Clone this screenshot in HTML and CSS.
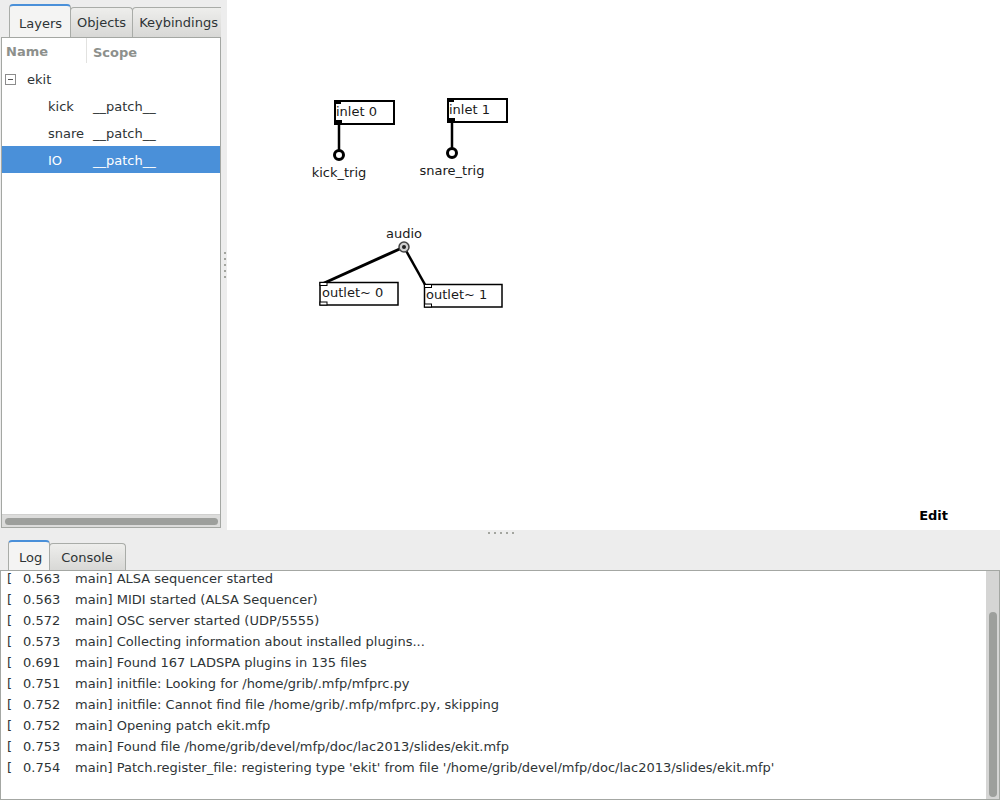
FILE: index.html
```html
<!DOCTYPE html>
<html>
<head>
<meta charset="utf-8">
<link rel="stylesheet" href="styles.css">
</head>
<body>
<div class="app">
  <div class="top">
    <div class="sidebar">
      <div class="tabs">
        <div class="tab active">Layers</div>
        <div class="tab">Objects</div>
        <div class="tab">Keybindings</div>
      </div>
      <div class="frame">
        <div class="tree">
          <div class="row header"><span class="c1">Name</span><span class="c2">Scope</span></div>
          <div class="row"><span class="c1 lvl0"><span class="exp"></span>ekit</span><span class="c2"></span></div>
          <div class="row"><span class="c1 lvl1">kick</span><span class="c2">__patch__</span></div>
          <div class="row"><span class="c1 lvl1">snare</span><span class="c2">__patch__</span></div>
          <div class="row selected"><span class="c1 lvl1">IO</span><span class="c2">__patch__</span></div>
        </div>
        <div class="hscroll"><div class="hthumb"></div></div>
      </div>
    </div>
    <div class="vhandle"><span class="dot"></span><span class="dot"></span><span class="dot"></span><span class="dot"></span><span class="dot"></span></div>
    <div class="canvas">
      <svg class="patch" width="773" height="530" viewBox="227 0 773 530" xmlns="http://www.w3.org/2000/svg">
        <g class="obj">
          <rect x="335" y="101" width="59" height="23" fill="#fff" stroke="#000" stroke-width="2"/>
          <rect x="334" y="100" width="7" height="4" fill="#000"/>
          <rect x="334" y="120" width="8" height="5" fill="#000"/>
          <text x="336" y="116">inlet 0</text>
          <line x1="339" y1="124" x2="339" y2="151" stroke="#000" stroke-width="2.5"/>
          <circle cx="339" cy="155" r="4.5" fill="#fff" stroke="#000" stroke-width="3"/>
          <text x="339" y="177" text-anchor="middle">kick_trig</text>
        </g>
        <g class="obj">
          <rect x="448" y="99" width="59" height="23" fill="#fff" stroke="#000" stroke-width="2"/>
          <rect x="447" y="98" width="7" height="4" fill="#000"/>
          <rect x="447" y="118" width="8" height="5" fill="#000"/>
          <text x="449" y="114">inlet 1</text>
          <line x1="452" y1="122" x2="452" y2="149" stroke="#000" stroke-width="2.5"/>
          <circle cx="452" cy="153" r="4.5" fill="#fff" stroke="#000" stroke-width="3"/>
          <text x="452" y="175" text-anchor="middle">snare_trig</text>
        </g>
        <g class="obj">
          <text x="404" y="238" text-anchor="middle">audio</text>
          <line x1="404" y1="247" x2="322" y2="284" stroke="#000" stroke-width="3"/>
          <line x1="404" y1="247" x2="428" y2="290" stroke="#000" stroke-width="2.5"/>
          <circle cx="404" cy="247" r="5" fill="#d0d0d0" stroke="#444" stroke-width="1.5"/>
          <circle cx="404" cy="247" r="2" fill="#222"/>
          <rect x="320" y="282.5" width="78" height="22.5" fill="#fff" stroke="#000" stroke-width="1.5"/>
          <rect x="320" y="282.5" width="7" height="3" fill="#fff" stroke="#000" stroke-width="1"/>
          <rect x="320" y="302" width="7" height="3" fill="#fff" stroke="#000" stroke-width="1"/>
          <text x="322" y="297">outlet~ 0</text>
          <rect x="424.5" y="284.5" width="77.5" height="22.5" fill="#fff" stroke="#000" stroke-width="1.5"/>
          <rect x="424.5" y="284.5" width="7" height="3" fill="#fff" stroke="#000" stroke-width="1"/>
          <rect x="424.5" y="304" width="7" height="3" fill="#fff" stroke="#000" stroke-width="1"/>
          <text x="426" y="299">outlet~ 1</text>
        </g>
      </svg>
      <div class="mode">Edit</div>
    </div>
  </div>
  <div class="bottom">
    <div class="hhandle"><span class="dot"></span><span class="dot"></span><span class="dot"></span><span class="dot"></span><span class="dot"></span></div>
    <div class="tabs btabs">
      <div class="tab active tab-log">Log</div>
      <div class="tab tab-console">Console</div>
    </div>
    <div class="logframe">
      <div class="log">
        <div class="line"><span class="br">[</span><span class="t">0.563</span><span class="m">main] ALSA sequencer started</span></div>
        <div class="line"><span class="br">[</span><span class="t">0.563</span><span class="m">main] MIDI started (ALSA Sequencer)</span></div>
        <div class="line"><span class="br">[</span><span class="t">0.572</span><span class="m">main] OSC server started (UDP/5555)</span></div>
        <div class="line"><span class="br">[</span><span class="t">0.573</span><span class="m">main] Collecting information about installed plugins...</span></div>
        <div class="line"><span class="br">[</span><span class="t">0.691</span><span class="m">main] Found 167 LADSPA plugins in 135 files</span></div>
        <div class="line"><span class="br">[</span><span class="t">0.751</span><span class="m">main] initfile: Looking for /home/grib/.mfp/mfprc.py</span></div>
        <div class="line"><span class="br">[</span><span class="t">0.752</span><span class="m">main] initfile: Cannot find file /home/grib/.mfp/mfprc.py, skipping</span></div>
        <div class="line"><span class="br">[</span><span class="t">0.752</span><span class="m">main] Opening patch ekit.mfp</span></div>
        <div class="line"><span class="br">[</span><span class="t">0.753</span><span class="m">main] Found file /home/grib/devel/mfp/doc/lac2013/slides/ekit.mfp</span></div>
        <div class="line"><span class="br">[</span><span class="t">0.754</span><span class="m">main] Patch.register_file: registering type 'ekit' from file '/home/grib/devel/mfp/doc/lac2013/slides/ekit.mfp'</span></div>
      </div>
      <div class="vscroll"><div class="vthumb"></div></div>
    </div>
  </div>
</div>
</body>
</html>
```
FILE: styles.css
```css
* { box-sizing: border-box; margin: 0; padding: 0; }
body {
  margin: 0;
  width: 1000px;
  height: 800px;
  overflow: hidden;
  background: #ededed;
  font: 13px "DejaVu Sans", sans-serif;
  color: #2e3436;
}
.app { display: flex; flex-direction: column; height: 800px; }
.top { display: flex; height: 530px; }

.sidebar {
  width: 221px;
  padding: 0 0 2px 1px;
  display: flex;
  flex-direction: column;
  overflow: hidden;
}
.tabs {
  display: flex;
  align-items: flex-end;
  height: 37px;
  padding-left: 8px;
  flex-shrink: 0;
  white-space: nowrap;
}
.tab {
  height: 30px;
  padding: 0 6px;
  border: 1px solid #a9aca8;
  border-bottom: none;
  border-radius: 4px 4px 0 0;
  background: linear-gradient(#eeeeec, #d8d8d6);
  display: flex;
  align-items: center;
  flex-shrink: 0;
  color: #2e3436;
}
.tab + .tab { margin-left: -1px; }
.tab.active {
  height: 33px;
  padding: 3px 8px 0 9px;
  background: #f4f4f3;
  border-top: 2px solid #4a90d9;
  border-color: #4a90d9 #a9aca8 #a9aca8 #a9aca8;
  position: relative;
  z-index: 1;
}

.frame {
  flex: 1;
  border: 1px solid #a4a7a3;
  background: #fff;
  display: flex;
  flex-direction: column;
  width: 220px;
}
.tree { flex: 1; }
.row { display: flex; height: 27px; padding-top: 2px; line-height: 25px; white-space: nowrap; }
.row .c1 { width: 85px; padding-left: 4px; display: flex; align-items: center; }
.row .c2 { padding-left: 6px; }
.header { color: #8d908c; font-weight: bold; padding-top: 0; }
.header .c1 { border-right: 1px solid #e2e2e0; height: 25px; padding-top: 2px; }
.header .c2 { padding-top: 2px; }
.lvl0 { padding-left: 3px !important; }
.lvl1 { padding-left: 46px !important; }
.exp {
  width: 11px;
  height: 11px;
  border: 1px solid #8c8c8c;
  position: relative;
  margin-right: 11px;
  margin-top: -1px;
}
.exp::after {
  content: "";
  position: absolute;
  left: 2px;
  right: 2px;
  top: 4px;
  height: 1px;
  background: #555;
}
.selected { background: #4a90d9; color: #fff; }

.hscroll {
  height: 13px;
  background: #dcdcdb;
  border-top: 1px solid #d0d0cf;
  padding: 3px 2px 3px 3px;
}
.hthumb { height: 7px; border-radius: 4px; background: #9d9f9c; }

.vhandle {
  width: 6px;
  display: flex;
  flex-direction: column;
  align-items: center;
  padding-top: 252px;
  gap: 4px;
  padding-left: 1px;
}
.dot { width: 2px; height: 2px; background: #a3a59f; display: block; }

.canvas {
  flex: 1;
  background: #fff;
  position: relative;
  display: flex;
  flex-direction: column;
  justify-content: flex-end;
  align-items: flex-end;
  padding: 0 52px 6px 0;
}
.patch { position: absolute; left: 0; top: 0; }
.patch text { font: 13px "DejaVu Sans", sans-serif; fill: #1a1a1a; }
.mode { font-weight: bold; color: #000; line-height: 16px; position: relative; }

.bottom { flex: 1; display: flex; flex-direction: column; }
.hhandle {
  height: 10px;
  display: flex;
  justify-content: center;
  gap: 4px;
  padding-top: 2px;
  padding-left: 1px;
}
.btabs { height: 30px; }
.btabs .tab { height: 27px; }
.btabs .tab.active { height: 30px; padding: 3px 7px 0 10px; }
.btabs .tab-console { padding: 0 12px 0 11px; }

.logframe {
  flex: 1;
  border: 1px solid #a4a7a3;
  background: #fff;
  display: flex;
  overflow: hidden;
}
.log { flex: 1; overflow: hidden; padding-left: 6px; margin-top: -3px; }
.line { height: 21px; line-height: 21px; white-space: nowrap; display: flex; }
.line .br { width: 16px; }
.line .t { width: 52px; }
.vscroll {
  width: 13px;
  background: #d5d5d4;
  padding: 41px 2px 2px 3px;
  display: flex;
}
.vthumb { flex: 1; border-radius: 4px; background: #9d9f9c; }
```
